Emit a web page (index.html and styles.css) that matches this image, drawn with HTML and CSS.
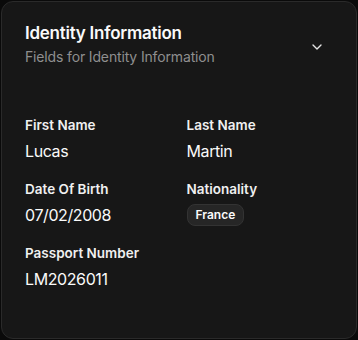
FILE: index.html
```html
<!DOCTYPE html>
<html lang="en">
<head>
<meta charset="utf-8">
<link rel="stylesheet" href="styles.css">
</head>
<body>
<section class="card">
  <header class="card-header">
    <div class="heading">
      <h2 class="title">Identity Information</h2>
      <p class="subtitle">Fields for Identity Information</p>
    </div>
    <button class="toggle" type="button" aria-label="Collapse">
      <svg width="16" height="16" viewBox="0 0 24 24" fill="none" stroke="currentColor" stroke-width="2" stroke-linecap="round" stroke-linejoin="round"><path d="m6 9 6 6 6-6"/></svg>
    </button>
  </header>
  <div class="fields">
    <div class="field">
      <span class="label">First Name</span>
      <span class="value">Lucas</span>
    </div>
    <div class="field">
      <span class="label">Last Name</span>
      <span class="value">Martin</span>
    </div>
    <div class="field">
      <span class="label">Date Of Birth</span>
      <span class="value">07/02/2008</span>
    </div>
    <div class="field">
      <span class="label">Nationality</span>
      <span class="badge">France</span>
    </div>
    <div class="field">
      <span class="label">Passport Number</span>
      <span class="value">LM2026011</span>
    </div>
  </div>
</section>
</body>
</html>
```
FILE: styles.css
```css
* { box-sizing: border-box; }
html, body { background: #0a0a0a; }
body {
  margin: 0;
  padding: 1px;
  font-family: Inter, "Noto Sans", sans-serif;
  color: #fafafa;
}
.card {
  height: 338px;
  background: #171717;
  border: 1px solid #2a2a2a;
  border-radius: 12px;
  padding: 19px 21px 22px 23px;
}
.card-header {
  display: flex;
  align-items: center;
  justify-content: space-between;
}
.heading {
  display: flex;
  flex-direction: column;
  gap: 2px;
}
.title {
  margin: 0;
  font-size: 17px;
  line-height: 24px;
  font-weight: 600;
  letter-spacing: -0.25px;
}
.subtitle {
  margin: 0;
  font-size: 14px;
  line-height: 20px;
  letter-spacing: -0.15px;
  color: #8f8f8f;
}
.toggle {
  width: 32px;
  height: 32px;
  border: 0;
  background: transparent;
  color: #e5e5e5;
  padding: 0;
  display: flex;
  align-items: center;
  justify-content: center;
  margin: 6px 2px 0 0;
}
.fields {
  margin-top: 48px;
  display: grid;
  grid-template-columns: 1fr 1fr;
  column-gap: 13px;
  row-gap: 16px;
}
.field {
  display: flex;
  flex-direction: column;
  align-items: flex-start;
  gap: 4px;
}
.label {
  font-size: 13.5px;
  line-height: 20px;
  font-weight: 600;
  color: #f0f0f0;
}
.value {
  font-size: 16px;
  line-height: 24px;
  letter-spacing: -0.4px;
  color: #fafafa;
}
.badge {
  margin-top: 1px;
  font-size: 12px;
  line-height: 16px;
  font-weight: 600;
  padding: 2px 8px;
  border: 1px solid #333333;
  background: #262626;
  border-radius: 8px;
  color: #fafafa;
}
```
